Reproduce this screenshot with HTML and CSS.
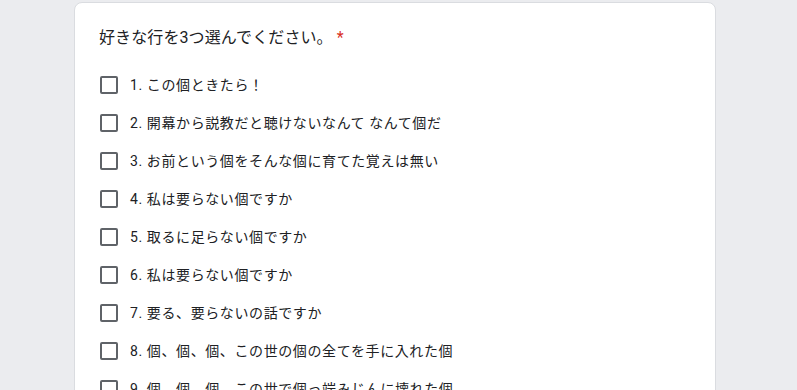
FILE: index.html
```html
<!DOCTYPE html>
<html lang="ja">
<head>
    <meta charset="UTF-8">
    <meta name="viewport" content="width=device-width, initial-scale=1.0">
    <title>フォーム</title>
    <link rel="stylesheet" href="styles.css">
</head>
<body>
    <div class="page">
        <div class="card">
            <div class="question">
                好きな行を3つ選んでください。<span class="required">*</span>
            </div>
            <div class="options">
                <label class="option"><span class="box"></span><span class="label">1. この個ときたら！</span></label>
                <label class="option"><span class="box"></span><span class="label">2. 開幕から説教だと聴けないなんて なんて個だ</span></label>
                <label class="option"><span class="box"></span><span class="label">3. お前という個をそんな個に育てた覚えは無い</span></label>
                <label class="option"><span class="box"></span><span class="label">4. 私は要らない個ですか</span></label>
                <label class="option"><span class="box"></span><span class="label">5. 取るに足らない個ですか</span></label>
                <label class="option"><span class="box"></span><span class="label">6. 私は要らない個ですか</span></label>
                <label class="option"><span class="box"></span><span class="label">7. 要る、要らないの話ですか</span></label>
                <label class="option"><span class="box"></span><span class="label">8. 個、個、個、この世の個の全てを手に入れた個</span></label>
                <label class="option"><span class="box"></span><span class="label">9. 個、個、個、この世で個っ端みじんに壊れた個</span></label>
            </div>
        </div>
    </div>
</body>
</html>
```

FILE: styles.css
```css
body {
    margin: 0;
    background-color: #ebecef;
    font-family: Roboto, "Noto Sans CJK JP", sans-serif;
    color: #202124;
    overflow: hidden;
}
.page {
    padding: 2px 0 0 74px;
}
.card {
    width: 592px;
    background-color: #fff;
    border: 1px solid #dadce0;
    border-radius: 8px;
    padding: 23px 24px 24px 24px;
}
.question {
    font-size: 16px;
    line-height: 24px;
    letter-spacing: 0.1px;
}
.required {
    color: #d93025;
    margin-left: 4px;
}
.options {
    margin-top: 16px;
    display: flex;
    flex-direction: column;
}
.option {
    display: flex;
    align-items: center;
    height: 38px;
    cursor: pointer;
}
.box {
    box-sizing: border-box;
    width: 18px;
    height: 18px;
    border: 2px solid #5f6368;
    border-radius: 2px;
    margin-left: 1px;
    flex-shrink: 0;
}
.label {
    font-size: 14px;
    line-height: 20px;
    margin-left: 12px;
    letter-spacing: 0.6px;
}
```
